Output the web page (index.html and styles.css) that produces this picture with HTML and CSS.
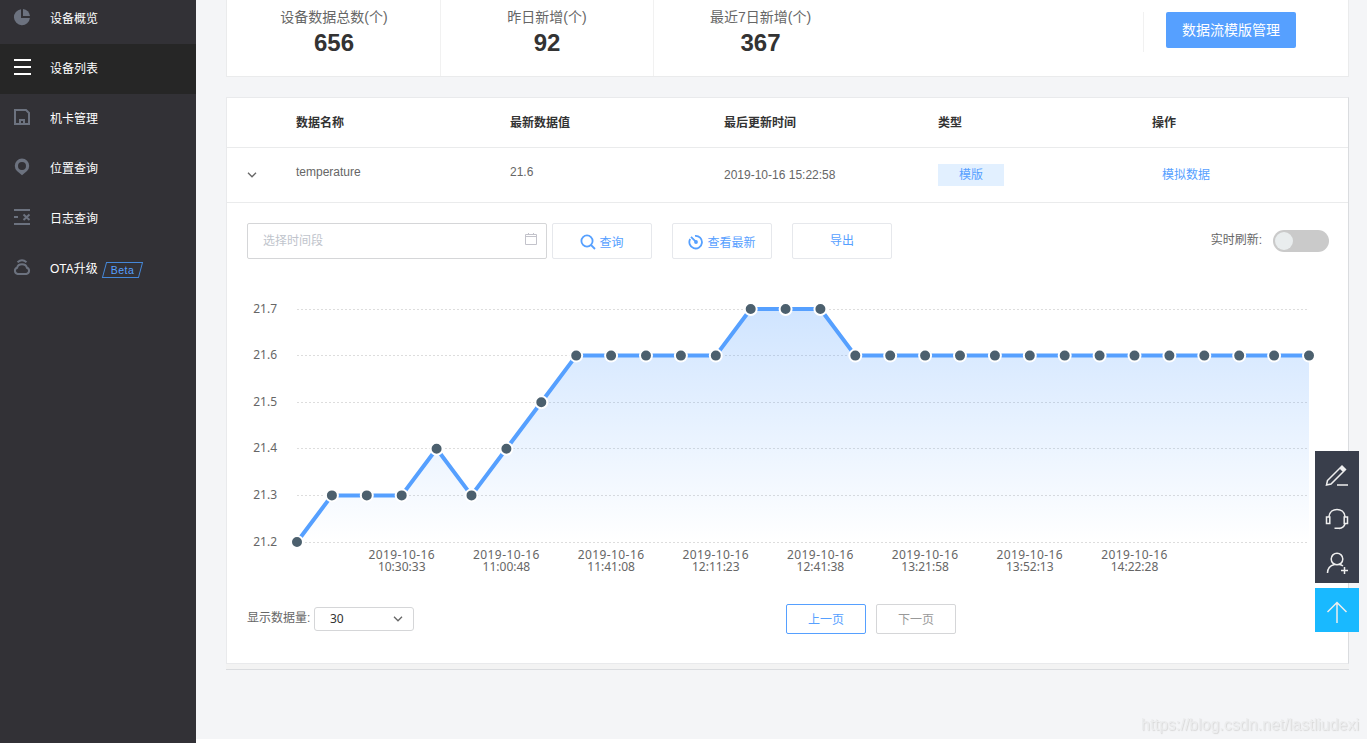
FILE: index.html
```
<!DOCTYPE html>
<html lang="zh-CN">

<head>
    <meta charset="UTF-8">
    <title>设备列表</title>
    <link rel="stylesheet" href="styles.css">
</head>

<body>
    <!--左侧菜单-->
    <ul class="sidebar">
        <li>
            <svg class="menu-icon" viewBox="0 0 18 18"><path fill="currentColor" d="M8 1.200V10h8.900A8 8 0 1 1 8 1.200z"/><path fill="currentColor" d="M10 1a7.500 7.500 0 0 1 7 7h-7z"/></svg>
            <span>设备概览</span>
        </li>
        <li class="active">
            <svg class="menu-icon" viewBox="0 0 18 18"><path fill="currentColor" d="M1 1h17v2H1zM1 8h17v2H1zM1 15h17v2H1z"/></svg>
            <span>设备列表</span>
        </li>
        <li>
            <svg class="menu-icon" viewBox="0 0 18 18"><path fill="none" stroke="currentColor" stroke-width="2" d="M2 2h11l3 3V16H2zM7 16v-4h4v4"/></svg>
            <span>机卡管理</span>
        </li>
        <li>
            <svg class="menu-icon" viewBox="0 0 18 18"><path fill="currentColor" fill-rule="evenodd" d="M9 17.200L4 13A7.200 7.200 0 1 1 14 13zM9 4a4 4 0 1 0 0 8 4 4 0 0 0 0-8z"/></svg>
            <span>位置查询</span>
        </li>
        <li>
            <svg class="menu-icon" viewBox="0 0 18 18"><path fill="none" stroke="currentColor" stroke-width="2" d="M1 2h16M1 16h16M1 9h4M10.500 6.500l6 5.500M16.500 6.500l-6 5.500"/></svg>
            <span>日志查询</span>
        </li>
        <li>
            <svg class="menu-icon" viewBox="0 0 18 18"><path fill="none" stroke="currentColor" stroke-width="2" d="M4.500 4.200Q9 .2 13.500 4.200M4.700 16a3.200 3.200 0 0 1-.6-6.200C5 5 13 5 13.900 9.800A3.200 3.200 0 0 1 13.300 16z"/></svg>
            <span>OTA升级</span>
            <em class="beta"><i>Beta</i></em>
        </li>
    </ul>

    <div class="main">
        <!--统计-->
        <div class="stats">
            <div class="stat"><p>设备数据总数(个)</p><b>656</b></div>
            <div class="stat"><p>昨日新增(个)</p><b>92</b></div>
            <div class="stat"><p>最近7日新增(个)</p><b>367</b></div>
            <div class="manage"><button class="btn-primary">数据流模版管理</button></div>
        </div>

        <!--数据流-->
        <div class="panel">
            <div class="row thead">
                <div></div>
                <div>数据名称</div>
                <div>最新数据值</div>
                <div>最后更新时间</div>
                <div>类型</div>
                <div>操作</div>
            </div>
            <div class="row tbody">
                <div class="fold"><svg width="10" height="6" viewBox="0 0 10 6"><path d="M1 .8l4 4 4-4"/></svg></div>
                <div class="up">temperature</div>
                <div class="up">21.6</div>
                <div>2019-10-16 15:22:58</div>
                <div><span class="tag">模版</span></div>
                <div><a class="link">模拟数据</a></div>
            </div>

            <div class="toolbar">
                <div class="date">
                    <span>选择时间段</span>
                    <svg width="14" height="14" viewBox="0 0 14 14"><path d="M1.500 2.500h11v10h-11zM1.500 4.500h11M4.500 1v2M9.500 1v2"/></svg>
                </div>
                <button class="btn query">
                    <svg width="16" height="16" viewBox="0 0 16 16"><circle cx="7" cy="7" r="5.600"/><path d="M11 11l4 4"/></svg>
                    <span>查询</span>
                </button>
                <button class="btn latest">
                    <svg width="16" height="16" viewBox="0 0 16 16"><path d="M7 1.900A6.300 6.300 0 1 1 2.200 5"/><path d="M3 2.800l5 5"/><circle class="dot" cx="8" cy="8" r="1"/></svg>
                    <span>查看最新</span>
                </button>
                <button class="btn export">导出</button>
                <label>实时刷新:</label>
                <div class="switch"></div>
            </div>

            <svg class="chart" id="chart" width="1121" height="336" viewBox="227 259 1121 336">
                <defs>
                    <linearGradient id="area" x1="0" y1="0" x2="0" y2="1">
                        <stop offset="0" stop-color="#56a0ff" stop-opacity=".28"/>
                        <stop offset="1" stop-color="#56a0ff" stop-opacity="0"/>
                    </linearGradient>
                </defs>
            </svg>

            <div class="pager">
                <span>显示数据量:</span>
                <div class="select">
                    <span>30</span>
                    <svg width="10" height="6" viewBox="0 0 10 6"><path d="M1 .8l4 4 4-4"/></svg>
                </div>
                <button class="page prev">上一页</button>
                <button class="page next">下一页</button>
            </div>
        </div>
        <div class="panel-end"></div>
    </div>

    <!--右侧悬浮工具-->
    <div class="tools">
        <div class="tool-group">
            <div><svg viewBox="0 0 24 24"><path d="M2.500 16.500L17 2l3.500 3.500L6 20l-4.500 1zM15 4l3.500 3.500M16 3l3.500 3.500M12 21h11"/></svg></div>
            <div><svg viewBox="0 0 24 24"><path d="M4 8.500C5-1 19-1 20 8.500M1.500 9h3.300v6.500H1.500zM19.200 9h3.300v6.500h-3.300zM20 16c-1 3-3 4.200-6 4.500M9.500 20.300h5"/></svg></div>
            <div><svg viewBox="0 0 24 24"><circle cx="12" cy="7" r="5.800"/><path d="M2.500 21c0-4.500 3-7.500 7-8.500M14.500 12.500c1.500.2 2.500.7 3.500 1.500M19.500 15v7M16 18.500h7"/></svg></div>
        </div>
        <div class="to-top"><svg viewBox="0 0 24 24"><path d="M12 1.500V22M2.500 11L12 1.500l9.500 9.500"/></svg></div>
    </div>
    <div class="watermark">https://blog.csdn.net/lastliudexi</div>

    <script type="text/javascript">
    window.onload = function() {
        var oChart = document.getElementById("chart");
        var data = [21.2, 21.3, 21.3, 21.3, 21.4, 21.3, 21.4, 21.5, 21.6, 21.6, 21.6, 21.6, 21.6, 21.7, 21.7, 21.7, 21.6, 21.6, 21.6, 21.6, 21.6, 21.6, 21.6, 21.6, 21.6, 21.6, 21.6, 21.6, 21.6, 21.6];
        var times = ['10:30:33', '11:00:48', '11:41:08', '12:11:23', '12:41:38', '13:21:58', '13:52:13', '14:22:28'];
        var left = 297, right = 1309, bottom = 542, unit = 466;
        var html = '';
        var points = [];
        var dots = '';

        function getX(i) {
            return left + (right - left) / (data.length - 1) * i;
        }

        function getY(v) {
            return bottom - (v - 21.2) * unit;
        }
        for (var i = 0; i < data.length; i++) {
            var x = getX(i).toFixed(1);
            var y = getY(data[i]).toFixed(1);
            points.push(x + ',' + y);
            dots += '<circle class="point" cx="' + x + '" cy="' + y + '" r="6"/>';
        }
        // 网格线和Y轴
        for (var k = 0; k < 6; k++) {
            var gy = Math.floor(getY(21.2 + k / 10) + 0.1);
            html += '<line class="grid" x1="' + left + '" x2="' + right + '" y1="' + (gy + 0.5) + '" y2="' + (gy + 0.5) + '"/>';
            html += '<text class="axis" text-anchor="end" x="277" y="' + (gy + 4) + '">' + (21.2 + k / 10).toFixed(1) + '</text>';
        }
        // X轴
        for (var j = 0; j < times.length; j++) {
            var tx = getX(3 + j * 3).toFixed(1);
            html += '<text class="axis" text-anchor="middle" y="559"><tspan class="day" x="' + tx + '">2019-10-16</tspan><tspan x="' + tx + '" dy="12">' + times[j] + '</tspan></text>';
        }
        html += '<polygon fill="url(#area)" points="' + left + ',' + bottom + ' ' + points.join(' ') + ' ' + right + ',' + bottom + '"/>';
        html += '<polyline class="line" points="' + points.join(' ') + '"/>';
        oChart.innerHTML += html + dots;
    }
    </script>
</body>

</html>
```
FILE: styles.css
```
* {
    box-sizing: border-box;
}

body {
    margin: 0;
    display: flex;
    height: 743px;
    overflow: hidden;
    background-color: #FFF;
    color: #666;
    font: 12px/18px "Liberation Sans", "Noto Sans CJK SC", sans-serif;
}

ul,
p {
    margin: 0;
    padding: 0;
    list-style: none;
}

svg {
    display: block;
    flex: none;
}

button {
    font: inherit;
    padding: 0;
    background-color: #FFF;
    border-radius: 2px;
}

.sidebar {
    width: 196px;
    flex: none;
    background-color: #323136;
    color: #FFF;
}

.sidebar li {
    display: flex;
    align-items: center;
    height: 50px;
    padding-left: 13px;
}

.sidebar li:first-child {
    margin-top: -6px;
}

.sidebar .active {
    background-color: #262626;
}

.menu-icon {
    width: 18px;
    height: 18px;
    margin: 0 19px 4px 0;
    color: #6C727F;
}

.active .menu-icon {
    color: #FFF;
}

.beta {
    width: 37px;
    height: 16px;
    margin: 1px 0 0 6px;
    border: 1px solid #4587D8;
    transform: skewX(-15deg);
    color: #56A0FF;
    font-size: 10.5px;
    line-height: 14px;
    text-align: center;
    letter-spacing: 0.5px;
}

.beta i {
    display: block;
    font-style: normal;
    transform: skewX(15deg);
}

.main {
    flex: 1;
    height: 739px;
    padding-left: 30px;
    background-color: #F4F5F7;
}

.stats {
    display: flex;
    width: 1123px;
    height: 77px;
    border: 1px solid #EAEBEC;
    border-top: 0;
    padding-left: 1px;
    background-color: #FFF;
}

.stat {
    width: 213px;
    padding-top: 7px;
    border-right: 1px solid #F1F1F1;
    text-align: center;
    font-size: 14px;
    line-height: 21px;
}

.stat:nth-child(3) {
    border-right: 0;
}

.stat b {
    display: block;
    color: #333;
    font-size: 24px;
    line-height: 30px;
}

.manage {
    width: 205px;
    height: 40px;
    margin: 12px 0 0 auto;
    border-left: 1px solid #F1F1F1;
    padding-left: 22px;
}

.btn-primary {
    display: block;
    width: 130px;
    height: 36px;
    border: 0;
    background-color: #56A0FF;
    color: #FFF;
    font-size: 14px;
}

.panel {
    width: 1123px;
    height: 567px;
    margin-top: 20px;
    border: 1px solid #E9EAEC;
    border-right-color: #DADCDF;
    background-color: #FFF;
}

.panel-end {
    width: 1123px;
    height: 6px;
    background-color: #F3F3F3;
    border-bottom: 1px solid #DADCDF;
}

.row {
    display: grid;
    grid-template-columns: 69px repeat(5, 214px);
    align-items: center;
    border-bottom: 1px solid #EAEBEC;
}

.thead {
    height: 50px;
    color: #333;
    font-weight: bold;
}

.tbody {
    height: 55px;
}

.fold {
    padding-left: 20px;
}

.fold path,
.select path {
    fill: none;
    stroke: #666;
    stroke-width: 1.3;
}

.up {
    margin-top: -6px;
}

.tag {
    display: block;
    width: 66px;
    height: 22px;
    background-color: #E2F0FF;
    color: #56A0FF;
    text-align: center;
    line-height: 23px;
}

.link {
    margin-left: 10px;
    color: #56A0FF;
}

.toolbar {
    display: flex;
    height: 56px;
    padding: 20px 19px 0 20px;
}

.date {
    display: flex;
    justify-content: space-between;
    width: 300px;
    height: 36px;
    margin-right: 5px;
    padding: 8px 8px 0 15px;
    border: 1px solid #D5D6D8;
    border-radius: 2px;
    color: #C0C4CC;
}

.date path {
    fill: none;
    stroke: #C3C3CB;
}

.btn {
    display: flex;
    align-items: center;
    justify-content: center;
    width: 100px;
    height: 36px;
    margin-right: 20px;
    border: 1px solid #E6E8EC;
    color: #56A0FF;
}

.btn svg {
    margin: 1px 3px 0 0;
    fill: none;
    stroke: #56A0FF;
    stroke-width: 1.8;
}

.btn span {
    margin-top: 4px;
}

.btn .dot {
    fill: #56A0FF;
}

.toolbar label {
    margin: 8px 11px 0 auto;
}

.switch {
    width: 56px;
    height: 22px;
    margin-top: 7px;
    padding: 2px;
    border-radius: 11px;
    background-color: #CACACA;
}

.switch::before {
    content: "";
    display: block;
    width: 18px;
    height: 18px;
    border-radius: 50%;
    background-color: #E9EDEE;
}

.axis {
    font-family: "Noto Sans", sans-serif;
    fill: #666;
}

.day {
    letter-spacing: 0.4px;
}

.grid {
    stroke: #DDD;
    stroke-dasharray: 2 2;
}

.line {
    fill: none;
    stroke: #56A0FF;
    stroke-width: 4;
    stroke-linejoin: round;
}

.point {
    fill: #4C606E;
    stroke: #FFF;
    stroke-width: 2;
}

.pager {
    display: flex;
    align-items: center;
    height: 48px;
    padding-left: 20px;
}

.pager > span {
    width: 67px;
    margin-bottom: 2px;
    white-space: nowrap;
}

.select {
    display: flex;
    align-items: center;
    justify-content: space-between;
    width: 100px;
    height: 24px;
    padding: 0 10px 0 15px;
    border: 1px solid #D5D6D8;
    border-radius: 3px;
    color: #333;
    font-family: "Noto Sans", sans-serif;
}

.page {
    width: 80px;
    height: 30px;
    margin-right: 10px;
    padding-top: 2px;
    border: 1px solid #D5D6D8;
    color: #999;
}

.prev {
    margin-left: 372px;
    border-color: #56A0FF;
    color: #56A0FF;
}

.tools {
    position: fixed;
    top: 451px;
    right: 8px;
    width: 44px;
}

.tool-group {
    margin-bottom: 5px;
    background-color: #393E4B;
}

.tool-group div,
.to-top {
    display: flex;
    align-items: center;
    justify-content: center;
    height: 44px;
    padding-top: 5px;
}

.to-top {
    background-color: #19B9FF;
}

.tools svg {
    width: 24px;
    height: 24px;
    fill: none;
    stroke: #EEE;
    stroke-width: 1.5;
}

.watermark {
    position: fixed;
    right: 8px;
    bottom: 8px;
    color: #ECEDEE;
    font-size: 16px;
    line-height: 20px;
    text-shadow: 1px 1px 1px #D8D8D8;
}
```
